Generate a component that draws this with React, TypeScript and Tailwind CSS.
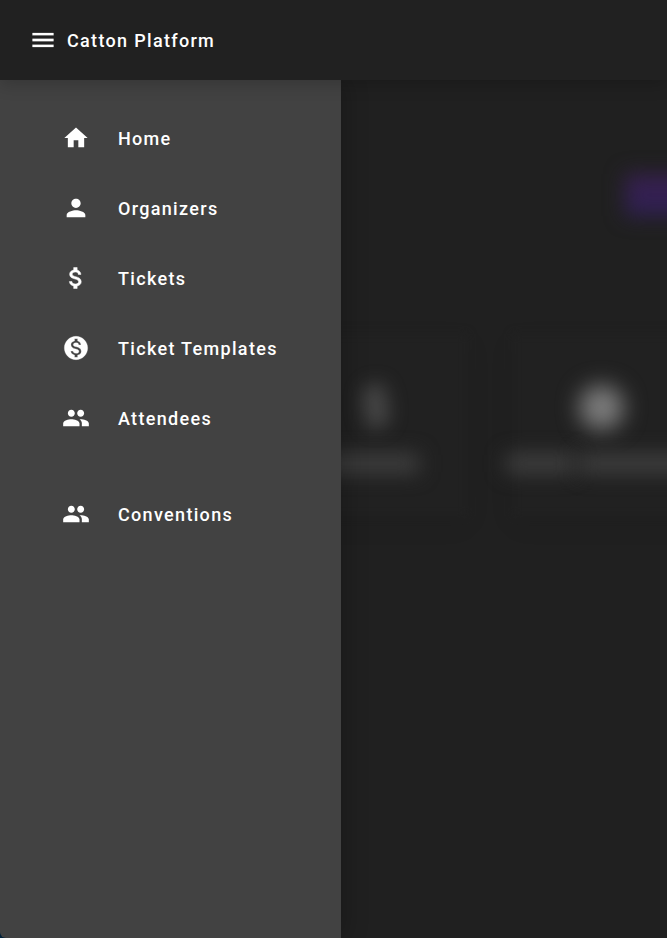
import { MdMenu, MdHome, MdPerson, MdAttachMoney, MdMonetizationOn, MdPeople } from "react-icons/md";

const items = [
  { label: "Home", Icon: MdHome, stroke: "" },
  { label: "Organizers", Icon: MdPerson, stroke: "" },
  { label: "Tickets", Icon: MdAttachMoney, stroke: "[&>path:last-child]:stroke-[0.4]" },
  { label: "Ticket Templates", Icon: MdMonetizationOn, stroke: "[&>path:last-child]:stroke-[0.25]" },
  { label: "Attendees", Icon: MdPeople, stroke: "" },
];

function NavItem({ label, Icon, stroke }: (typeof items)[number]) {
  return (
    <a className="flex h-[70px] items-center gap-[28px] pl-[62px]">
      <Icon className={`size-7 ${stroke}`} />
      <span className="pt-[2px]">{label}</span>
    </a>
  );
}

export default function App() {
  return (
    <div className="flex h-[938px] w-[667px] flex-col overflow-hidden bg-[#212121] font-[Roboto,sans-serif] text-lg font-medium tracking-[1.32px] text-white">
      <header className="relative z-10 flex h-20 shrink-0 items-center gap-[10px] bg-[#212121] pl-[29px] shadow-[0_4px_16px_rgba(0,0,0,0.2)]">
        <MdMenu className="size-7 [&>path:last-child]:stroke-[0.2]" />
        <span className="pt-[2px]">Catton Platform</span>
      </header>
      <div className="flex min-h-0 flex-1 bg-[#03233c]">
        <nav className="relative z-[1] flex w-[341px] shrink-0 flex-col rounded-bl-[6px] bg-[#424242] pt-[23px] shadow-[6px_0_22px_rgba(0,0,0,0.2)]">
          {items.map((item) => (
            <NavItem key={item.label} {...item} />
          ))}
          <div className="mt-[26px]">
            <NavItem label="Conventions" Icon={MdPeople} stroke="" />
          </div>
        </nav>
        <main className="relative flex-1 overflow-hidden bg-[#202020]">
          <div className="absolute -left-[40px] top-[254px] h-[182px] w-[166px] bg-[#212121] shadow-[0_8px_24px_rgba(0,0,0,0.07)] blur-[4px]" />
          <div className="absolute left-[172px] top-[254px] h-[182px] w-[190px] bg-[#212121] shadow-[0_8px_24px_rgba(0,0,0,0.07)] blur-[4px]" />
          <div className="absolute left-[284px] top-[94px] h-[42px] w-[110px] bg-linear-to-b from-[#38204e] to-[#2f2054] blur-[10px]" />
          <MdAttachMoney className="absolute left-[9px] top-[299px] size-[54px] text-[#7d7d7d] blur-[10px]" />
          <div className="absolute left-[238px] top-[305px] size-[45px] rounded-full bg-[#7c7c7c] blur-[11px]" />
          <div className="absolute -left-[20px] top-[374px] h-[19px] w-[98px] bg-[#404040] blur-[10px]" />
          <div className="absolute left-[165px] top-[374px] h-[19px] w-[69px] bg-[#404040] blur-[10px]" />
          <div className="absolute left-[238px] top-[374px] h-[19px] w-[130px] bg-[#404040] blur-[10px]" />
        </main>
      </div>
    </div>
  );
}
